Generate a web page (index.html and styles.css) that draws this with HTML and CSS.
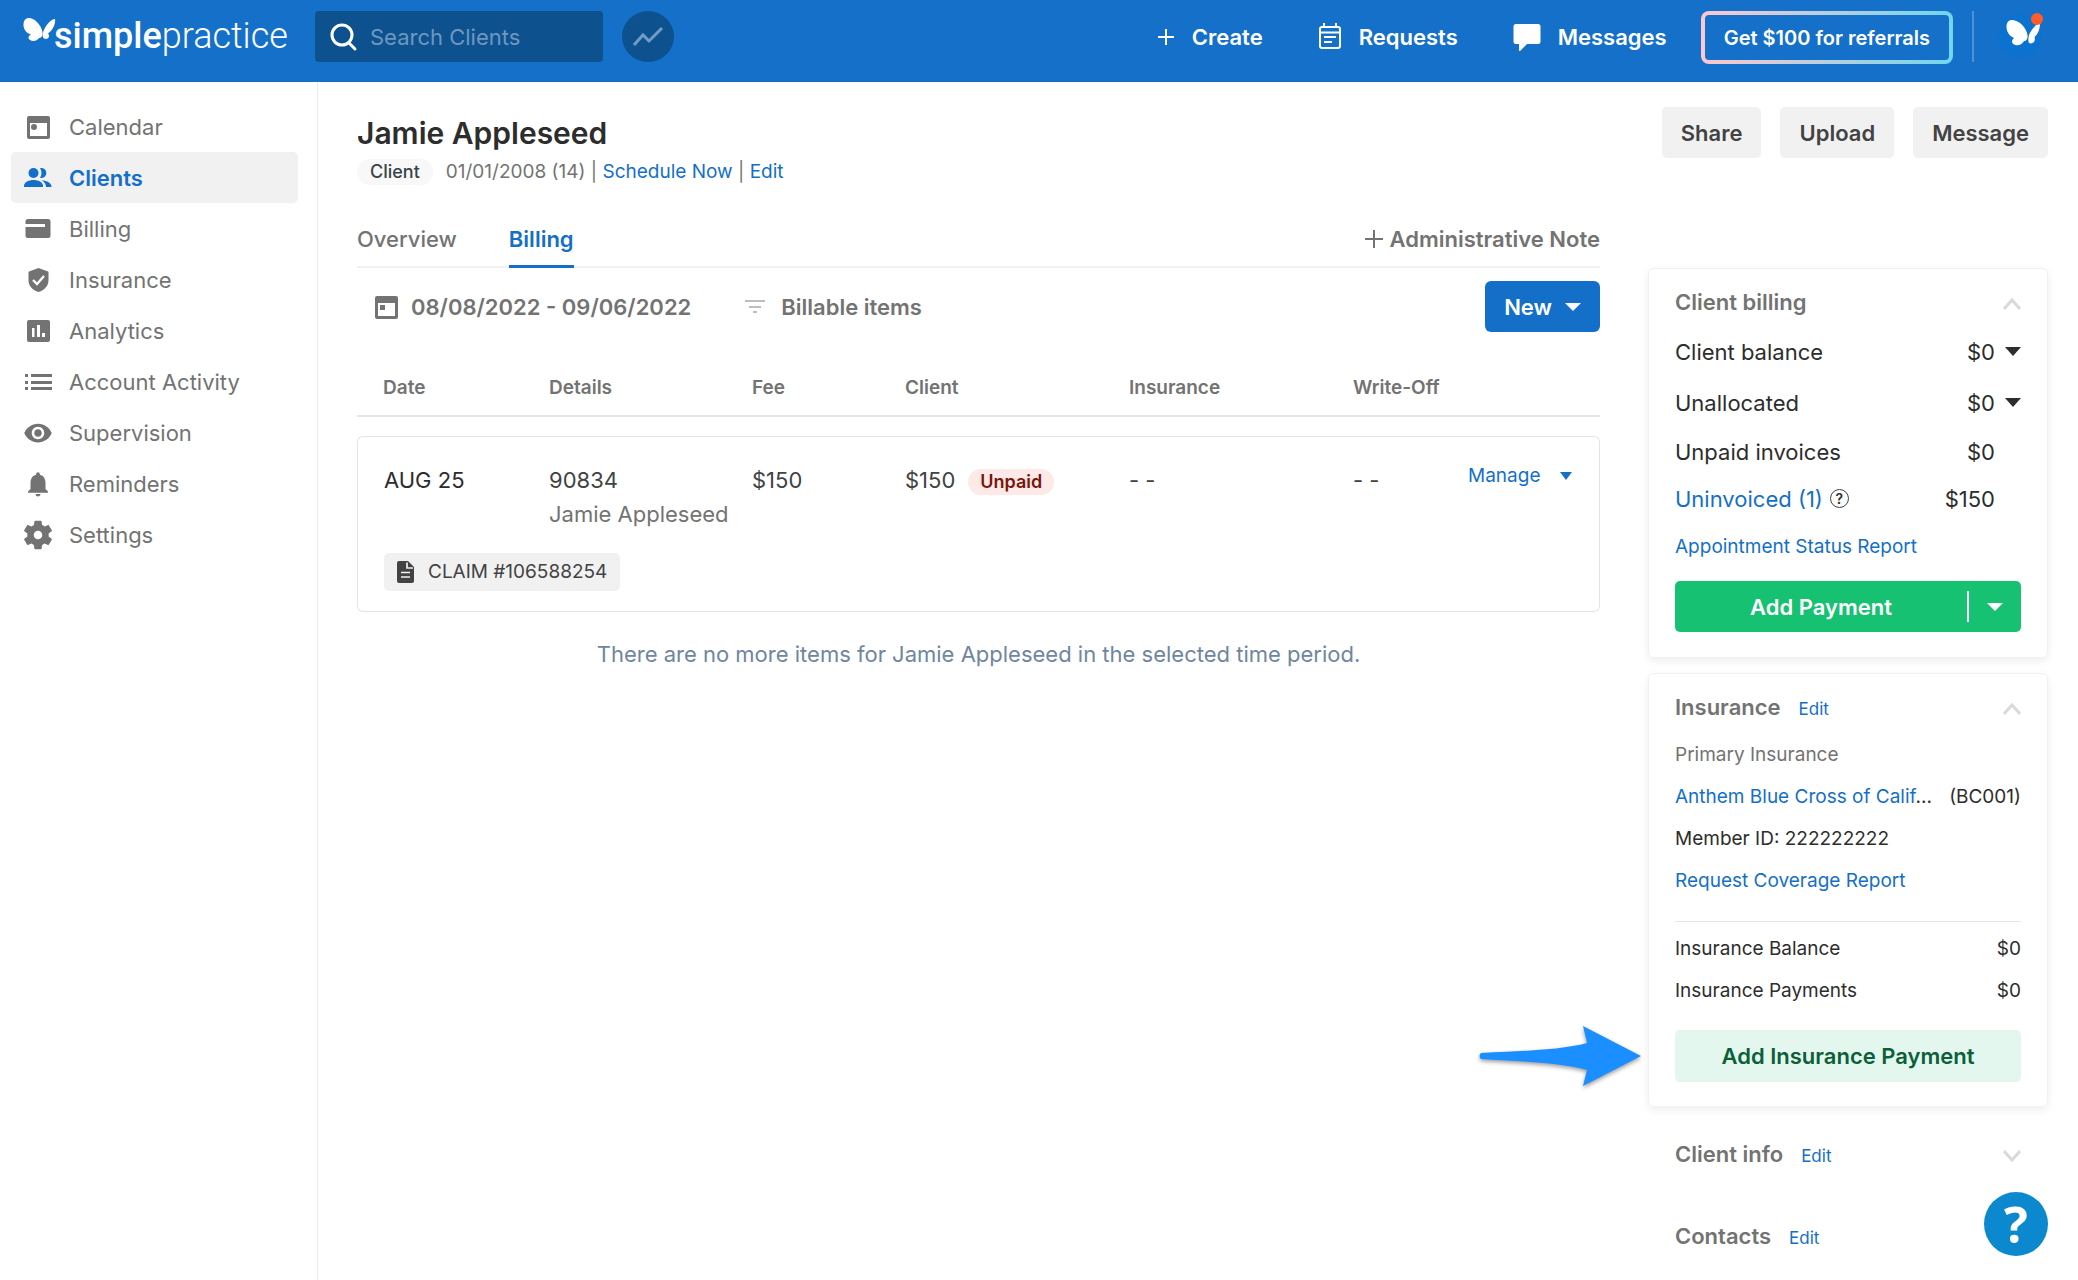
FILE: index.html
```html
<!DOCTYPE html>
<html lang="en">
<head>
<meta charset="utf-8">
<title>Jamie Appleseed - Billing</title>
<link rel="stylesheet" href="styles.css">
</head>
<body>
<header class="topbar">
  <a class="logo" href="#" aria-label="SimplePractice home">
    <svg class="logo-mark" width="34" height="26" viewBox="0 0 34 26" fill="#fff"><path d="M0.500 8C0.500 3 3 0.500 7 1C13 2.500 18 8 19.500 15C20 19 18 21 16 21C14 24 10 25 7 23C4.500 21.500 5.500 18.500 8 17.500C3 16 0.500 12 0.500 8Z"/><path d="M32 2C28 2 23 8 20.500 14C19.500 17 19 20 21 21.500C23 22.500 26 21.500 26 19C26 18 25.500 17 25 16.500C29 14 33 7 32 2Z"/></svg>
    <span class="logo-text"><b>simple</b>practice</span>
  </a>
  <label class="search">
    <svg width="28" height="30" viewBox="0 0 28 30" fill="none" stroke="#fff" stroke-width="3" stroke-linecap="round"><circle cx="12" cy="13" r="10"/><path d="M19 21l6 6"/></svg>
    <input type="search" placeholder="Search Clients" aria-label="Search Clients">
  </label>
  <button class="trend" aria-label="Trends"><svg width="32" height="24" viewBox="0 0 32 24" fill="none" stroke="#729bc5" stroke-width="3"><path d="M2 20L11 10L17 16L30 3"/></svg></button>
  <nav class="top-actions">
    <a href="#"><svg width="18" height="18" viewBox="0 0 18 18" stroke="#fff" stroke-width="2"><path d="M9 1v16M1 9h16"/></svg>Create</a>
    <a href="#"><svg width="24" height="28" viewBox="0 0 24 28" fill="none" stroke="#fff" stroke-width="2"><rect x="2" y="4" width="20" height="21" rx="2"/><path d="M2 9.500h20M6 0v5M18 0v5M6 14h12M6 19h8"/></svg>Requests</a>
    <a href="#"><svg width="28" height="28" viewBox="0 0 28 28" fill="#fff"><path d="M3 1h22a2.500 2.500 0 0 1 2.500 2.500v15a2.500 2.500 0 0 1-2.500 2.500H14l-7 7h-1v-7H3a2.500 2.500 0 0 1-2.500-2.500v-15A2.500 2.500 0 0 1 3 1z"/></svg>Messages</a>
  </nav>
  <button class="referral">Get $100 for referrals</button>
  <a class="avatar" href="#" aria-label="Account"><svg width="46" height="50" viewBox="0 0 46 50"><circle cx="22" cy="25" r="22" fill="#0b72d0"/><g transform="translate(8 8)" fill="#fff"><path d="M0.500 8C0.500 3 3 0.500 7 1C14 2.500 20 8 21.500 16C22 20 20 22 18 22C16 26 11 27 8 25.500C5 24 6 20.500 8 19C3 17 0.500 12 0.500 8Z"/><path d="M34 4C30 5 25 11 23 16C22 20 22 24 24 24.500C27 25 30 22 28.500 18C32 15 34 10 34 4Z"/></g><circle cx="39" cy="8" r="6" fill="#ff5c2b"/></svg></a>
</header>
<div class="shell">
  <nav class="sidebar">
    <a href="#"><svg viewBox="0 0 30 30"><path fill-rule="evenodd" d="M6 4h19a2 2 0 0 1 2 2v19a2 2 0 0 1-2 2H6a2 2 0 0 1-2-2V6a2 2 0 0 1 2-2zM7 11v13h17V11z"/><circle cx="11" cy="15" r="3"/></svg>Calendar</a>
    <a href="#" class="current"><svg viewBox="0 0 30 30"><circle cx="10.500" cy="10" r="5"/><path d="M1 24v-1c0-4 5-6 9.500-6s9.500 2 9.500 6v1z"/><path d="M17 5.200a5 5 0 1 1 0 9.600c2-3 2-6.600 0-9.600zM19 17.200c5 .6 9.500 2.500 9.500 6.800h-5.500c0-3-1.500-5-4-6.800z"/></svg>Clients</a>
    <a href="#"><svg viewBox="0 0 30 30"><path fill-rule="evenodd" d="M5 5h20a2.500 2.500 0 0 1 2.500 2.500v14a2.500 2.500 0 0 1-2.500 2.500H5a2.500 2.500 0 0 1-2.500-2.500V13h19.500v-3H2.500V7.500A2.500 2.500 0 0 1 5 5z"/></svg>Billing</a>
    <a href="#"><svg viewBox="0 0 30 30"><path d="M15.500 3L25 6.500q.5.200.5 1V15c0 6-4 10-10 12C9.500 25 5.500 21 5.500 15V7.500q0-.8.5-1z"/><path d="M10 15l4 4 7-8" fill="none" stroke="#fff" stroke-width="2.300"/></svg>Insurance</a>
    <a href="#"><svg viewBox="0 0 30 30"><path fill-rule="evenodd" d="M6 4h19a2 2 0 0 1 2 2v18a2 2 0 0 1-2 2H6a2 2 0 0 1-2-2V6a2 2 0 0 1 2-2zM9 12v9h2.500v-9zM14 9v12h3V9zM19 17v4h3v-4z"/></svg>Analytics</a>
    <a href="#"><svg viewBox="0 0 30 30"><path d="M2 7h3v3H2zM2 14h3v3H2zM2 20h3v3H2zM8 7h21v3H8zM8 14h21v3H8zM8 20h21v3H8z"/></svg>Account Activity</a>
    <a href="#"><svg viewBox="0 0 24 24"><path d="M12 4.500C7 4.500 2.730 7.610 1 12c1.730 4.390 6 7.500 11 7.500s9.270-3.110 11-7.500c-1.730-4.390-6-7.500-11-7.500zM12 17c-2.760 0-5-2.240-5-5s2.240-5 5-5 5 2.240 5 5-2.240 5-5 5zm0-8c-1.660 0-3 1.340-3 3s1.340 3 3 3 3-1.340 3-3-1.340-3-3-3z"/></svg>Supervision</a>
    <a href="#"><svg viewBox="0 0 24 24"><path d="M12 22c1.100 0 2-.9 2-2h-4c0 1.100.89 2 2 2zm6-6v-5c0-3.070-1.640-5.640-4.500-6.320V4c0-.83-.67-1.500-1.500-1.500s-1.500.67-1.500 1.500v.68C7.630 5.360 6 7.920 6 11v5l-2 2v1h16v-1l-2-2z"/></svg>Reminders</a>
    <a href="#"><svg viewBox="1.500 1.500 21 21"><path d="M19.430 12.980c.04-.32.07-.64.07-.98s-.03-.66-.07-.98l2.110-1.650c.19-.15.24-.42.12-.64l-2-3.460c-.12-.22-.39-.3-.61-.22l-2.490 1c-.52-.4-1.080-.73-1.690-.98l-.38-2.650C14.460 2.180 14.250 2 14 2h-4c-.25 0-.46.18-.49.42l-.38 2.650c-.61.25-1.170.59-1.690.98l-2.490-1c-.23-.09-.49 0-.61.22l-2 3.460c-.13.22-.07.49.12.64l2.110 1.650c-.04.32-.07.65-.07.98s.03.66.07.98l-2.110 1.650c-.19.15-.24.42-.12.64l2 3.460c.12.22.39.3.61.22l2.490-1c.52.4 1.080.73 1.690.98l.38 2.650c.03.24.24.42.49.42h4c.25 0 .46-.18.49-.42l.38-2.650c.61-.25 1.170-.59 1.690-.98l2.490 1c.23.09.49 0 .61-.22l2-3.460c.12-.22.07-.49-.12-.64l-2.110-1.650zM12 15a3 3 0 1 1 0-6 3 3 0 0 1 0 6z"/></svg>Settings</a>
  </nav>
  <main class="page">
    <div class="page-head">
      <div>
        <h1>Jamie Appleseed</h1>
        <p class="meta"><span class="pill">Client</span><span>01/01/2008 (14) | <a href="#">Schedule Now</a> | <a href="#">Edit</a></span></p>
      </div>
      <div class="head-actions"><button>Share</button><button>Upload</button><button>Message</button></div>
    </div>
    <div class="columns">
      <section class="content">
        <div class="tabs">
          <a href="#">Overview</a><a href="#" class="active">Billing</a>
          <button class="note"><svg width="20" height="20" viewBox="0 0 20 20" stroke="#737373" stroke-width="2"><path d="M10 1v18M1 10h18"/></svg>Administrative Note</button>
        </div>
        <div class="toolbar">
          <button class="plain range"><svg width="30" height="30" viewBox="0 0 30 30" fill="#737373"><path fill-rule="evenodd" d="M6 4h19a2 2 0 0 1 2 2v19a2 2 0 0 1-2 2H6a2 2 0 0 1-2-2V6a2 2 0 0 1 2-2zM7 11v13h17V11z"/><path d="M9 13h5v5H9z"/></svg>08/08/2022 - 09/06/2022</button>
          <button class="plain filter"><svg width="20" height="14" viewBox="0 0 20 14" stroke="#bdbdbd" stroke-width="2"><path d="M0 1h20M4 7h12M8 12h4"/></svg>Billable items</button>
          <button class="new">New<svg width="16" height="8" viewBox="0 0 16 8" fill="#fff"><path d="M0 0h16L8 8z"/></svg></button>
        </div>
        <table class="items">
          <colgroup><col class="c-date"><col class="c-details"><col class="c-fee"><col class="c-client"><col class="c-ins"><col class="c-write"><col class="c-manage"></colgroup>
          <thead><tr><th>Date</th><th>Details</th><th>Fee</th><th>Client</th><th>Insurance</th><th>Write-Off</th><th></th></tr></thead>
          <tbody>
            <tr class="item"><td class="strong">AUG 25</td><td>90834<br><span class="muted">Jamie Appleseed</span></td><td>$150</td><td>$150<span class="unpaid">Unpaid</span></td><td>- -</td><td>- -</td><td><button class="manage">Manage<svg width="12" height="8" viewBox="0 0 12 8" fill="#146fc9"><path d="M0 0h12L6 8z"/></svg></button></td></tr>
            <tr class="claims"><td colspan="7"><a href="#" class="claim"><svg width="18" height="22" viewBox="0 0 18 22"><path d="M2 0h9l6 6v14a2 2 0 0 1-2 2H2a2 2 0 0 1-2-2V2a2 2 0 0 1 2-2z" fill="#434343"/><path d="M10 1.500V7h6M4 11.500h9M4 16h9" stroke="#f1f1f1" stroke-width="1.700" fill="none"/></svg>CLAIM #106588254</a></td></tr>
          </tbody>
        </table>
        <p class="end">There are no more items for Jamie Appleseed in the selected time period.</p>
      </section>
      <aside class="side">
        <section class="card billing">
          <div class="card-head"><h2>Client billing</h2><button class="fold" aria-label="Collapse"><svg width="18" height="12" viewBox="0 0 18 12"><path d="M1 11l8-9 8 9"/></svg></button></div>
          <dl class="sums">
            <div class="expandable"><dt>Client balance</dt><dd>$0<svg width="16" height="9" viewBox="0 0 16 9"><path d="M0 0h16L8 9z"/></svg></dd></div>
            <div class="expandable"><dt>Unallocated</dt><dd>$0<svg width="16" height="9" viewBox="0 0 16 9"><path d="M0 0h16L8 9z"/></svg></dd></div>
            <div><dt>Unpaid invoices</dt><dd>$0</dd></div>
            <div><dt><a href="#">Uninvoiced (1)</a><span class="hint">?</span></dt><dd>$150</dd></div>
          </dl>
          <a class="report" href="#">Appointment Status Report</a>
          <div class="pay"><button>Add Payment</button><button class="pay-more" aria-label="More payment options"><svg width="16" height="8" viewBox="0 0 16 8" fill="#fff"><path d="M0 0h16L8 8z"/></svg></button></div>
        </section>
        <section class="card insurance">
          <div class="card-head"><h2>Insurance</h2><a href="#">Edit</a><button class="fold" aria-label="Collapse"><svg width="18" height="12" viewBox="0 0 18 12"><path d="M1 11l8-9 8 9"/></svg></button></div>
          <div class="lines">
            <p class="muted">Primary Insurance</p>
            <p class="payer"><span><a href="#">Anthem Blue Cross of Calif</a>...</span><span>(BC001)</span></p>
            <p>Member ID: 222222222</p>
            <p><a href="#">Request Coverage Report</a></p>
          </div>
          <dl class="lines totals"><div><dt>Insurance Balance</dt><dd>$0</dd></div><div><dt>Insurance Payments</dt><dd>$0</dd></div></dl>
          <div class="add-ins"><button>Add Insurance Payment</button>
            <svg class="pointer" width="164" height="66" viewBox="0 0 164 66"><path d="M3 28C40 26 85 25 109 18L105 1L163 31L105 61L109 45C85 38 40 36 3 34Q0 31 3 28Z" fill="#1b8fff"/></svg>
          </div>
        </section>
        <section class="flat"><div class="card-head"><h2>Client info</h2><a href="#">Edit</a><button class="fold" aria-label="Expand"><svg width="18" height="12" viewBox="0 0 18 12"><path d="M1 1l8 9 8-9"/></svg></button></div></section>
        <section class="flat"><div class="card-head"><h2>Contacts</h2><a href="#">Edit</a></div></section>
      </aside>
    </div>
  </main>
</div>
<button class="help" aria-label="Help">?</button>
</body>
</html>
```
FILE: styles.css
```css
* { box-sizing: border-box; }
body { margin: 0; background: #fff; color: #2d2d2d; font: 400 22px/34px Inter, "Liberation Sans", sans-serif; }
button, input { font: inherit; color: inherit; border: 0; background: none; margin: 0; padding: 0; }
button { cursor: pointer; }
a { color: #146fc9; text-decoration: none; }
h1, h2, p, dl, dd { margin: 0; }
svg { flex: none; }

/* Top bar */
.topbar { display: flex; align-items: flex-start; height: 82px; padding: 11px 34px 0 23px; background: #1470c9; color: #fff; }
.logo { display: flex; align-items: flex-start; width: 292px; height: 51px; color: #fff; }
.logo-mark { margin-top: 6px; margin-right: -3px; }
.logo-text { font: 300 36px/51px Roboto, sans-serif; }
.logo-text b { font-weight: 500; }
.search { display: flex; align-items: center; gap: 12px; width: 288px; height: 51px; padding: 0 15px; border-radius: 4px; background: #0d528f; }
.search input { flex: 1; min-width: 0; outline: 0; }
.search input::placeholder { color: #6e97c0; opacity: 1; }
.trend { display: grid; place-items: center; width: 52px; height: 51px; margin-left: 19px; border-radius: 50%; background: #0d528f; }
.top-actions { display: flex; align-items: center; gap: 55px; height: 51px; margin-left: auto; font-weight: 600; }
.top-actions a { display: flex; align-items: center; gap: 17px; color: #fff; }
.referral { height: 53px; margin-left: 34px; padding: 0 19px; border: 4px solid transparent; border-radius: 8px; background: linear-gradient(#1470c9, #1470c9) padding-box, linear-gradient(90deg, #ffc8cd, #70d6ee) border-box; font-size: 20px; font-weight: 600; }
.avatar { height: 51px; margin-left: 19px; padding-left: 24px; border-left: 2px solid #4c91d6; }

/* Sidebar */
.shell { display: flex; min-height: calc(100vh - 82px); }
.sidebar { flex: none; width: 318px; padding: 19px 19px 0 11px; border-right: 1px solid #ececec; }
.sidebar a { display: flex; align-items: center; gap: 16px; height: 51px; padding-left: 12px; border-radius: 5px; color: #737373; }
.sidebar svg { width: 30px; height: 30px; fill: currentColor; }
.sidebar .current { background: #f1f1f1; color: #146fc9; font-weight: 600; }

/* Page */
.page { flex: 1; min-width: 0; padding: 25px 30px 0 39px; }
.page-head { display: flex; justify-content: space-between; height: 105px; }
h1 { font-size: 30px; line-height: 52px; font-weight: 600; }
.meta { display: flex; align-items: center; gap: 13px; height: 26px; font-size: 19px; color: #737373; }
.pill { padding: 0 13px; border-radius: 13px; background: #f8f8f8; color: #37444a; font-size: 18px; line-height: 26px; font-weight: 500; }
.head-actions { display: flex; gap: 19px; }
.head-actions button { height: 51px; padding: 0 19px; border-radius: 5px; background: #f1f1f1; color: #434343; font-weight: 600; }
.columns { display: flex; align-items: flex-start; gap: 48px; }
.content { flex: 1; min-width: 0; }
.tabs { display: flex; gap: 52px; height: 56px; border-bottom: 2px solid #f1f1f1; }
.tabs a { height: 56px; line-height: 54px; color: #737373; font-weight: 500; }
.tabs .active { color: #146fc9; border-bottom: 3px solid #146fc9; font-weight: 600; }
.note { display: flex; align-items: center; gap: 6px; margin-left: auto; color: #737373; font-weight: 600; }
.toolbar { display: flex; align-items: center; height: 51px; margin-top: 13px; padding-left: 14px; }
.plain { display: flex; align-items: center; color: #737373; font-weight: 600; }
.range { gap: 10px; }
.filter { gap: 16px; margin-left: 54px; }
.new { display: flex; align-items: center; gap: 13px; height: 51px; margin-left: auto; padding: 0 19px; border-radius: 6px; background: #146fc9; color: #fff; font-weight: 600; }
.items { width: 100%; table-layout: fixed; border-collapse: separate; border-spacing: 0; margin-top: 25px; text-align: left; }
.c-date { width: 192px; } .c-details { width: 203px; } .c-fee { width: 153px; } .c-client { width: 224px; } .c-ins { width: 224px; } .c-write { width: 115px; } .c-manage { width: 132px; }
th { padding: 4px 0 0; height: 60px; border-bottom: 2px solid #e4e4e4; font-size: 19px; font-weight: 600; color: #737373; }
th:first-child { padding-left: 26px; }
tbody::before { content: ""; display: block; height: 19px; }
td { padding: 0; vertical-align: top; }
.item td { height: 111px; padding-top: 26px; border-top: 1px solid #e4e4e4; color: #434343; }
.item .strong { padding-left: 26px; border-left: 1px solid #e4e4e4; border-top-left-radius: 6px; color: #2d2d2d; }
.item td:last-child { border-right: 1px solid #e4e4e4; border-top-right-radius: 6px; padding-top: 22px; }
.claims td { height: 65px; padding: 6px 26px 0; border: 1px solid #e4e4e4; border-top: 0; border-radius: 0 0 6px 6px; }
.item .muted, .muted { color: #737373; }
.unpaid { display: inline-block; margin-left: 13px; padding: 0 12px; border-radius: 13px; background: #fde9e7; color: #79150c; font-size: 18px; line-height: 26px; font-weight: 600; }
.manage { display: flex; align-items: center; gap: 20px; color: #146fc9; font-size: 19px; }
.claim { display: inline-flex; align-items: center; gap: 13px; height: 38px; padding: 0 13px; border-radius: 5px; background: #f1f1f1; color: #434343; font-size: 19px; }
.end { margin-top: 25px; text-align: center; color: #70859f; }

/* Right column */
.side { flex: none; width: 400px; margin-top: 56px; }
.card { padding: 0 26px; border: 1px solid #f1f1f1; border-radius: 6px; box-shadow: 0 3px 8px rgba(0, 0, 0, .07); }
.billing { height: 390px; }
.insurance { height: 434px; margin-top: 15px; }
.card-head { display: flex; align-items: baseline; gap: 18px; padding-top: 16px; }
.card-head a { font-size: 17px; }
h2 { font-size: 22px; font-weight: 600; color: #737373; }
.fold { margin-left: auto; }
.fold svg { fill: none; stroke: #dadada; stroke-width: 3; }
.sums { padding-top: 7px; }
.sums div { display: flex; justify-content: space-between; align-items: center; height: 47px; padding-right: 26px; }
.sums .expandable { height: 51px; padding-right: 0; }
.sums dt, .sums dd { display: flex; align-items: center; }
.sums dd { gap: 10px; }
.sums svg { fill: #2d2d2d; }
.hint { width: 19px; height: 19px; margin-left: 7px; border: 1px solid #434343; border-radius: 50%; font-size: 14px; line-height: 17px; font-weight: 600; text-align: center; }
.report { display: block; height: 59px; line-height: 50px; font-size: 19px; }
.pay { display: flex; align-items: center; height: 51px; border-radius: 5px; background: #17c172; color: #fff; }
.pay button:first-child { flex: 1; font-weight: 600; }
.pay-more { display: grid; place-items: center; width: 54px; height: 31px; border-left: 2px solid #fff; }
.lines { padding-top: 8px; font-size: 19px; }
.lines p, .lines div { height: 42px; line-height: 42px; }
.payer { display: flex; justify-content: space-between; white-space: nowrap; }
.totals { margin-top: 19px; padding-top: 6px; border-top: 1px solid #e4e4e4; }
.totals div { display: flex; justify-content: space-between; }
.add-ins { position: relative; padding-top: 18px; }
.add-ins button { width: 100%; height: 52px; border-radius: 5px; background: #e3f7ee; color: #0c5f38; font-weight: 600; }
.pointer { position: absolute; right: calc(100% + 33px); top: 13px; filter: drop-shadow(0 2px 2px rgba(0, 0, 0, .4)); }
.flat { height: 82px; padding: 14px 27px 0; }
.help { position: fixed; right: 30px; bottom: 24px; width: 64px; height: 64px; border-radius: 50%; background: #0b88ce; color: #fff; font: 700 50px/64px "Open Sans", sans-serif; }
```
